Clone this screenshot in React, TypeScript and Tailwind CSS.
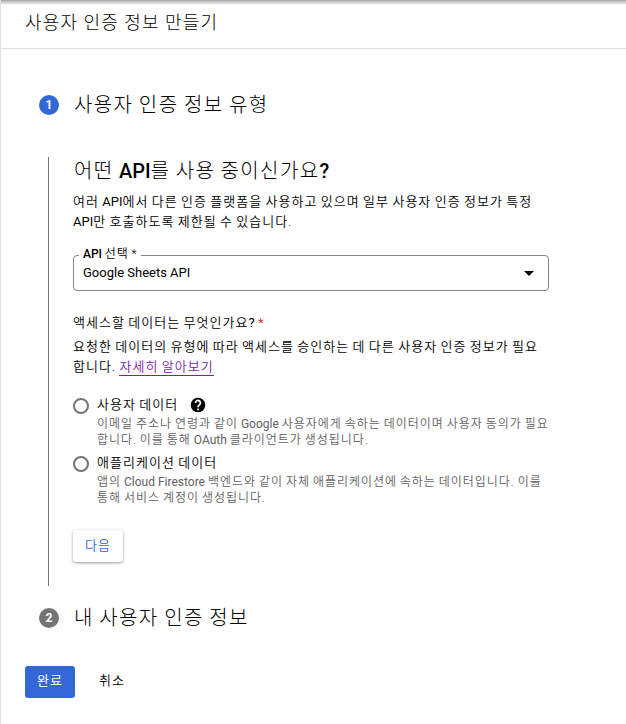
import type { ReactNode } from 'react';

const OPTIONS = [
  {
    label: '사용자 데이터',
    help: true,
    lines: [
      <>이메일 주소나 연령과 같이 <Latin>Google</Latin> 사용자에게 속하는 데이터이며 사용자 동의가 필요</>,
      <>합니다. 이를 통해 <Latin>OAuth</Latin> 클라이언트가 생성됩니다.</>,
    ],
  },
  {
    label: '애플리케이션 데이터',
    help: false,
    lines: [
      <>앱의 <Latin>Cloud Firestore</Latin> 백엔드와 같이 자체 애플리케이션에 속하는 데이터입니다. 이를</>,
      <>통해 서비스 계정이 생성됩니다.</>,
    ],
  },
];

// Hangul is tracked wider than the Latin words set inside it
function Latin({ children }: { children: ReactNode }) {
  return <span className="tracking-normal [word-spacing:0] font-normal">{children}</span>;
}

function StepHeader({ step, active, children }: { step: number; active?: boolean; children: ReactNode }) {
  return (
    <div className="flex items-center h-8 pl-[38px]">
      <span className={`flex items-center justify-center w-5 h-5 rounded-full text-[12px] font-bold text-white ${active ? 'bg-[#3367d6]' : 'bg-[#757575]'}`}>
        {step}
      </span>
      <h2 className="ml-[15px] text-[20px] leading-8 font-light tracking-[1.4px] [word-spacing:-0.8px]">{children}</h2>
    </div>
  );
}

function HelpIcon() {
  return (
    <svg width="16" height="16" viewBox="1 1 22 22" className="ml-3">
      <circle cx="12" cy="12" r="10" />
      <path d="M8.700 9.200a3.300 3.300 0 1 1 5.500 2.300C12.900 12.700 12 13.300 12 15M12 16.700v2.400" fill="none" stroke="#fff" strokeWidth="2.400" />
    </svg>
  );
}

export default function App() {
  return (
    <div className="h-[724px] overflow-hidden bg-white text-black border-l border-[#e0e0e0] whitespace-nowrap font-[350] font-[Roboto,'Noto_Sans_CJK_KR',sans-serif]">
      <div className="h-[5px] bg-linear-to-b from-[#a6a6a6] to-white" />
      <header className="h-11 pl-[24px] border-b border-[#e0e0e0]">
        <h1 className="text-[18px] leading-[36px] font-light tracking-[1.2px] [word-spacing:-0.4px]">사용자 인증 정보 만들기</h1>
      </header>

      <main>
        <div className="mt-10">
          <StepHeader step={1} active>사용자 인증 정보 유형</StepHeader>
        </div>

        {/* Step body */}
        <section className="mt-9 ml-[47px] h-[429px] border-l border-[#757575] pl-6">
          <h3 className="pl-px text-[20px] leading-7 font-light tracking-[1.4px] [word-spacing:-1px]">
            어떤 <b className="font-medium tracking-normal">API</b>를 사용 중이신가요<b className="font-medium">?</b>
          </h3>
          <div className="mt-[7px] text-[13px] leading-5 tracking-[1.03px] [word-spacing:-0.9px]">
            <p>여러 <Latin>API</Latin>에서 다른 인증 플랫폼을 사용하고 있으며 일부 사용자 인증 정보가 특정</p>
            <p><Latin>API</Latin>만 호출하도록 제한될 수 있습니다.</p>
          </div>

          <div className="relative mt-[23px] w-[476px] h-9 rounded-[4px] border border-[#80868b] flex items-center justify-between pl-[9px] pr-[14px]">
            <span className="absolute left-[5px] -top-[10px] pl-1 pr-[3px] bg-white text-[12px] leading-4 tracking-[0.9px] [word-spacing:-1px]">
              <span className="font-medium tracking-normal">API</span> 선택 *
            </span>
            <span className="text-[13px] font-normal">Google Sheets API</span>
            <svg width="10" height="5" viewBox="0 0 10 5">
              <path d="M0 0h10L5 5z" />
            </svg>
          </div>

          <p className="mt-[22px] text-[13px] leading-5 tracking-[1.03px] [word-spacing:-0.9px]">
            액세스할 데이터는 무엇인가요<Latin>?</Latin> <span className="font-normal text-[#d23f31]">*</span>
          </p>
          <div className="mt-1 text-[13px] leading-5 tracking-[1.03px] [word-spacing:-0.9px]">
            <p>요청한 데이터의 유형에 따라 액세스를 승인하는 데 다른 사용자 인증 정보가 필요</p>
            <p>
              합니다. <a href="#" className="inline-block h-[19px] border-b border-[#7b1fa2] text-[#7b1fa2]">자세히 알아보기</a>
            </p>
          </div>

          <div className="mt-[18px]">
            {OPTIONS.map(option => (
              <label key={option.label} className="flex h-[58px]">
                <span className="mt-[3px] w-4 h-4 shrink-0 rounded-full border-2 border-[#757575]" />
                <div className="ml-2">
                  <div className="flex items-center h-5 text-[13px] tracking-[1.03px] [word-spacing:-0.9px]">
                    {option.label}
                    {option.help && <HelpIcon />}
                  </div>
                  <div className="mt-px text-[12px] leading-4 tracking-[0.96px] [word-spacing:-0.9px] text-[#616161]">
                    {option.lines.map((line, i) => (
                      <p key={i}>{line}</p>
                    ))}
                  </div>
                </div>
              </label>
            ))}
          </div>

          <button className="mt-[19px] w-[50px] h-8 rounded-[3px] bg-white text-[13px] tracking-[1px] text-[#3367d6] shadow-[0_1px_3px_rgba(0,0,0,0.4)]">다음</button>
        </section>

        <div className="mt-4">
          <StepHeader step={2}>내 사용자 인증 정보</StepHeader>
        </div>

        <div className="mt-8 flex pl-6 text-[13px] tracking-[1px]">
          <button className="w-[50px] h-8 pb-[2px] rounded-[3px] bg-[#3367d6] font-normal text-white">완료</button>
          <button className="ml-6 h-8 pb-[2px]">취소</button>
        </div>
      </main>
    </div>
  );
}
